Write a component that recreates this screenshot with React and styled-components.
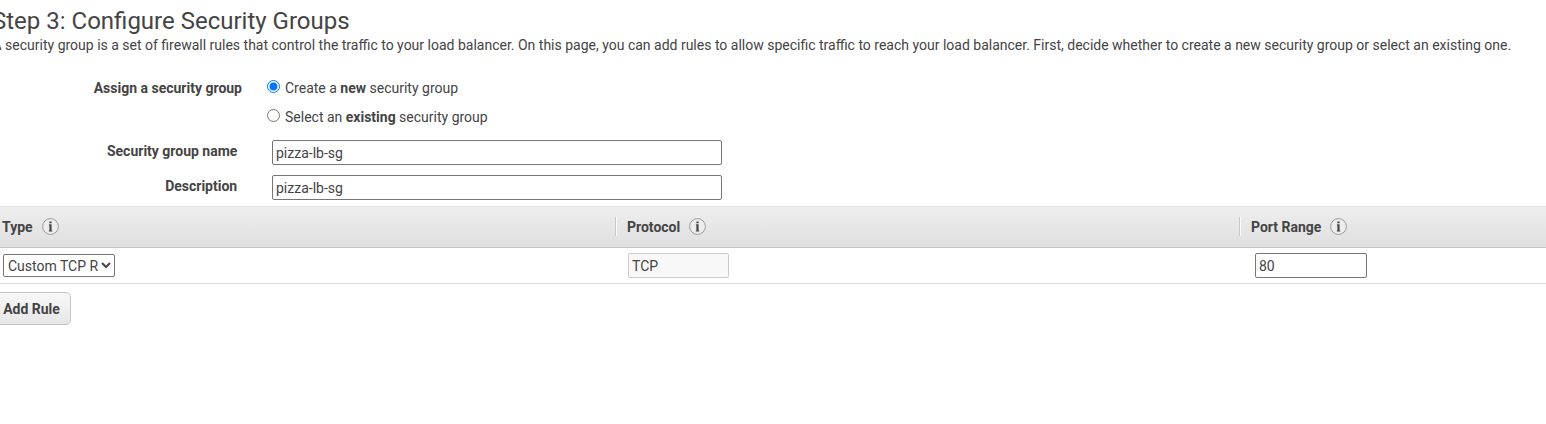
import React from "react";
import styled, { createGlobalStyle } from "styled-components";

const GlobalStyle = createGlobalStyle`
  *, *::before, *::after { box-sizing: border-box; }
  body {
    margin: 0;
    background: #fff;
    color: #444;
    font: 14px/18px Roboto, "Liberation Sans", sans-serif;
    overflow: hidden;
  }
`;

const Page = styled.main`
  height: 424px;
  padding-top: 6px;
  overflow: hidden;
`;

const Title = styled.h1`
  margin: 0 0 0 -8px;
  font-size: 24px;
  line-height: 30px;
  font-weight: 400;
  white-space: nowrap;
`;

const Intro = styled.p`
  margin: 0 0 0 -7.5px;
  line-height: 18px;
  white-space: nowrap;
`;

const Form = styled.form`
  padding-top: 19px;
  height: 152px;
`;

const Field = styled.div`
  display: flex;
  height: ${(p) => p.$height}px;
`;

const FieldLabel = styled.label`
  width: ${(p) => p.$width}px;
  padding-top: ${(p) => p.$top}px;
  flex: none;
  text-align: right;
  font-weight: 700;
`;

const Options = styled.div`
  padding-left: 25px;
`;

const Option = styled.label`
  display: flex;
  height: 29px;
  padding-top: 6px;
`;

const Radio = styled.input`
  width: 13px;
  height: 13px;
  margin: 1px 5px 0 0;
`;

const TextInput = styled.input`
  width: ${(p) => p.$width}px;
  height: 25px;
  margin: 0 0 0 ${(p) => p.$left || 0}px;
  padding: 1px 3px;
  border: 1px solid #767676;
  border-radius: 2px;
  background: #fff;
  color: #444;
  font: inherit;

  &:disabled {
    border-color: #ccc;
    background: #f8f8f8;
  }
`;

const columns = "615px 624px 1fr";

const TableHeader = styled.div`
  display: grid;
  grid-template-columns: ${columns};
  align-items: start;
  height: 42px;
  padding-top: 10px;
  border-top: 1px solid #e3e3e3;
  border-bottom: 1px solid #c4c4c4;
  background: linear-gradient(#eee, #dfdfdf);
`;

const HeaderCell = styled.div`
  display: flex;
  align-items: center;
  height: 19px;
  gap: 9px;
  padding-left: ${(p) => (p.$divided ? 11 : 2)}px;
  border-left: ${(p) => (p.$divided ? "1px solid #c8c8c8" : "none")};
  box-shadow: ${(p) => (p.$divided ? "inset 1px 0 #fafafa" : "none")};
  font-weight: 700;
`;

const InfoSvg = styled.svg`
  width: 17px;
  height: 17px;
  flex: none;
`;

const TableRow = styled.div`
  display: grid;
  grid-template-columns: ${columns};
  height: 36px;
  padding-top: 5px;
  border-bottom: 1px solid #ddd;
`;

const Select = styled.select`
  width: 112px;
  height: 23px;
  margin: 1px 0 0 3px;
  padding: 0;
  border: 1px solid #767676;
  border-radius: 2px;
  background-color: #fff;
  color: #444;
  font: inherit;
`;

const AddButton = styled.button`
  display: block;
  width: 81px;
  height: 33px;
  margin: 8px 0 0 -10px;
  padding: 0 10px 0 12px;
  border: 1px solid #c4c4c4;
  border-radius: 5px;
  background: linear-gradient(#f8f8f8, #e6e6e6);
  color: #444;
  font: inherit;
  font-weight: 700;
  white-space: nowrap;
`;

function InfoIcon() {
  return (
    <InfoSvg viewBox="0 0 17 17" aria-hidden="true">
      <circle cx="8.5" cy="8.5" r="7.9" fill="#ededed" stroke="#999" />
      <path d="M7.4 3.4h2.2v1.9H7.4zM6.9 6.2h2.7v6.4h.7v1H6.8v-1h.6V7.2h-.5z" fill="#444" />
    </InfoSvg>
  );
}

export default function App() {
  return (
    <>
      <GlobalStyle />
      <Page>
        <Title>Step 3: Configure Security Groups</Title>
        <Intro>
          A security group is a set of firewall rules that control the traffic to your load balancer. On this page, you can add rules to allow specific traffic to reach your load balancer. First, decide whether to create a new security group or select an existing one.
        </Intro>
        <Form>
          <Field $height={67}>
            <FieldLabel as="span" $width={242} $top={6}>Assign a security group</FieldLabel>
            <Options>
              <Option>
                <Radio type="radio" name="group" defaultChecked />
                <span>Create a <b>new</b> security group</span>
              </Option>
              <Option>
                <Radio type="radio" name="group" />
                <span>Select an <b>existing</b> security group</span>
              </Option>
            </Options>
          </Field>
          <Field $height={35}>
            <FieldLabel htmlFor="name" $width={237.4} $top={2}>Security group name</FieldLabel>
            <TextInput id="name" $width={450} $left={34.6} defaultValue="pizza-lb-sg" />
          </Field>
          <Field $height={31}>
            <FieldLabel htmlFor="description" $width={237.2} $top={2}>Description</FieldLabel>
            <TextInput id="description" $width={450} $left={34.8} defaultValue="pizza-lb-sg" />
          </Field>
        </Form>
        <TableHeader>
          <HeaderCell>Type<InfoIcon /></HeaderCell>
          <HeaderCell $divided>Protocol<InfoIcon /></HeaderCell>
          <HeaderCell $divided>Port Range<InfoIcon /></HeaderCell>
        </TableHeader>
        <TableRow>
          <Select aria-label="Type"><option>Custom TCP Rule</option></Select>
          <TextInput aria-label="Protocol" $width={101} $left={13} defaultValue="TCP" disabled />
          <TextInput aria-label="Port range" $width={112} $left={16} defaultValue="80" />
        </TableRow>
        <AddButton type="button">Add Rule</AddButton>
      </Page>
    </>
  );
}
